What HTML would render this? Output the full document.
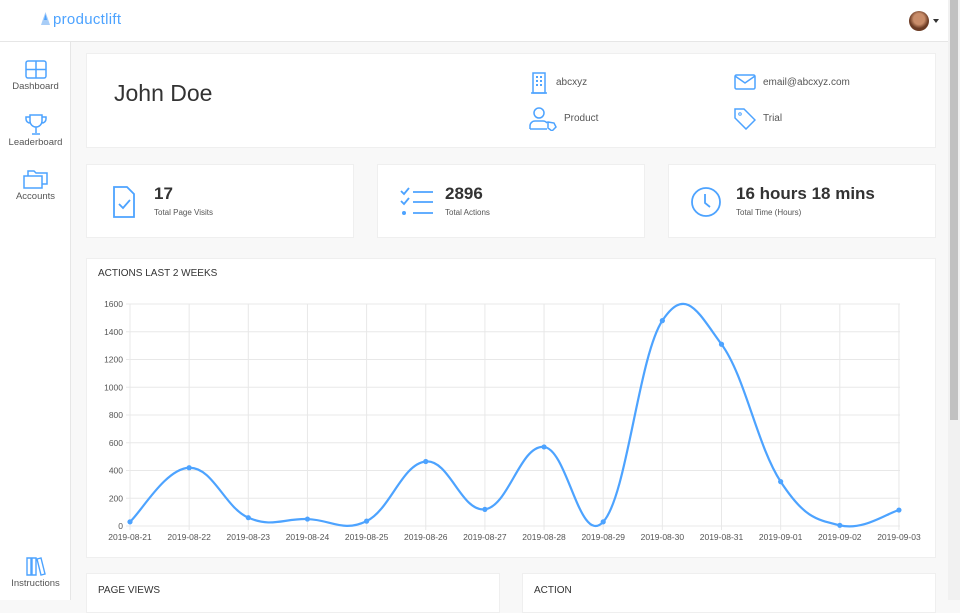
<!DOCTYPE html>
<html><head><meta charset="utf-8"><style>
*{box-sizing:border-box;margin:0;padding:0}
body{width:960px;height:600px;overflow:hidden;background:#f8f8f8;font-family:"Liberation Sans",sans-serif;color:#333;position:relative}
.top{position:absolute;left:0;top:0;width:948px;height:42px;background:#fff;border-bottom:1px solid #e6e6e6}
.logo{position:absolute;left:53px;top:11px;font-size:15px;color:#4da3ff;letter-spacing:.3px}
.side{position:absolute;left:0;top:42px;width:71px;height:558px;background:#fff;border-right:1px solid #e6e6e6}
.nav{position:absolute;left:0;width:71px;text-align:center;font-size:9.5px;color:#555}
.nav svg{display:block;margin:0 auto 2px}
.card{position:absolute;background:#fff;border:1px solid #efefef}
.scroll{position:absolute;right:0;top:0;width:12px;height:600px;background:#f1f1f1}
.scroll div{position:absolute;left:2px;top:0;width:8px;height:420px;background:#c1c1c1}
.lbl{font-size:10px;color:#555}
.big{font-size:17px;font-weight:bold;color:#333}
.sm{font-size:8px;color:#555;margin-top:4px}
</style></head><body>
<div class="top">
<svg style="position:absolute;left:40px;top:12px" width="11" height="14" viewBox="0 0 11 14"><path d="M5.5 0L8 7 10 13H1L3 7z" fill="#a8cdf7"/><path d="M5.5 2L7 8H4z" fill="#4da3ff"/></svg>
<div class="logo">productlift</div>
<div style="position:absolute;left:909px;top:11px;width:20px;height:20px;border-radius:50%;background:radial-gradient(circle at 50% 40%,#c98d6a 0 35%,#6b3b24 60%)"></div>
<div style="position:absolute;left:933px;top:19px;border:3px solid transparent;border-top:4px solid #333"></div>
</div>
<div class="side">
<div class="nav" style="top:18px"><svg width="22" height="19" viewBox="0 0 22 19"><rect x="1" y="1" width="20" height="17" rx="2" fill="none" stroke="#4da3ff" stroke-width="1.5"/><path d="M11 1v17M1 9.5h20" stroke="#4da3ff" stroke-width="1.5"/></svg>Dashboard</div>
<div class="nav" style="top:72px"><svg width="22" height="21" viewBox="0 0 22 21"><path d="M5 1h12v6a6 6 0 0 1-12 0zM5 3H1v2a4 4 0 0 0 4 4M17 3h4v2a4 4 0 0 1-4 4M11 13v6M7 20h8" fill="none" stroke="#4da3ff" stroke-width="1.5"/></svg>Leaderboard</div>
<div class="nav" style="top:127px"><svg width="25" height="20" viewBox="0 0 25 20"><path d="M1 7h18v12H1zM5 7V2h6l2 2h11v11h-5" fill="none" stroke="#4da3ff" stroke-width="1.5"/></svg>Accounts</div>
<div class="nav" style="top:514px"><svg width="22" height="20" viewBox="0 0 22 20"><path d="M2 2h4v17H2zM7 2h4v17H7zM12 3l4-1 4 16-4 1z" fill="none" stroke="#4da3ff" stroke-width="1.4"/></svg>Instructions</div>
</div>

<div class="card" style="left:86px;top:53px;width:850px;height:95px">
<div style="position:absolute;left:27px;top:26px;font-size:23px;color:#333">John Doe</div>
<svg style="position:absolute;left:443px;top:18px" width="18" height="22" viewBox="0 0 18 22"><rect x="3" y="1" width="12" height="20" fill="none" stroke="#4da3ff" stroke-width="1.5"/><path d="M1 21h16" stroke="#4da3ff" stroke-width="1.5"/><g fill="#4da3ff"><rect x="6" y="4" width="2" height="2"/><rect x="10" y="4" width="2" height="2"/><rect x="6" y="8" width="2" height="2"/><rect x="10" y="8" width="2" height="2"/><rect x="6" y="12" width="2" height="2"/><rect x="10" y="12" width="2" height="2"/></g></svg>
<div class="lbl" style="position:absolute;left:469px;top:23px">abcxyz</div>
<svg style="position:absolute;left:442px;top:53px" width="28" height="24" viewBox="0 0 28 24"><circle cx="10" cy="6" r="5" fill="none" stroke="#4da3ff" stroke-width="1.5"/><path d="M1 22v-3a5 5 0 0 1 5-5h8a5 5 0 0 1 4 2M1 22h17M19 15l6 1 2 4-4 4-4-3z" fill="none" stroke="#4da3ff" stroke-width="1.5"/></svg>
<div class="lbl" style="position:absolute;left:477px;top:59px">Product</div>
<svg style="position:absolute;left:647px;top:20px" width="22" height="16" viewBox="0 0 22 16"><rect x="1" y="1" width="20" height="14" rx="1.5" fill="none" stroke="#4da3ff" stroke-width="1.5"/><path d="M1 2l10 7 10-7" fill="none" stroke="#4da3ff" stroke-width="1.5"/></svg>
<div class="lbl" style="position:absolute;left:676px;top:23px">email@abcxyz.com</div>
<svg style="position:absolute;left:647px;top:54px" width="22" height="22" viewBox="0 0 22 22"><path d="M1 1h9l11 11-9 9L1 10z" fill="none" stroke="#4da3ff" stroke-width="1.5"/><circle cx="6" cy="6" r="1.3" fill="none" stroke="#4da3ff"/></svg>
<div class="lbl" style="position:absolute;left:676px;top:59px">Trial</div>
</div>

<div class="card" style="left:86px;top:164px;width:268px;height:74px">
<svg style="position:absolute;left:25px;top:20px" width="24" height="34" viewBox="0 0 24 34"><path d="M2 2h13l7 7v23H2z" fill="none" stroke="#4da3ff" stroke-width="1.8"/><path d="M7 19l4 4 7-8" fill="none" stroke="#4da3ff" stroke-width="1.8"/></svg>
<div style="position:absolute;left:67px;top:19px"><div class="big">17</div><div class="sm">Total Page Visits</div></div>
</div>
<div class="card" style="left:377px;top:164px;width:268px;height:74px">
<svg style="position:absolute;left:22px;top:22px" width="34" height="28" viewBox="0 0 34 28"><path d="M1 4l3 3 5-6M1 14l3 3 5-6M13 5h20M13 15h20M13 26h20" fill="none" stroke="#4da3ff" stroke-width="1.8"/><circle cx="4" cy="26" r="2" fill="#4da3ff"/></svg>
<div style="position:absolute;left:67px;top:19px"><div class="big">2896</div><div class="sm">Total Actions</div></div>
</div>
<div class="card" style="left:668px;top:164px;width:268px;height:74px">
<svg style="position:absolute;left:21px;top:21px" width="32" height="32" viewBox="0 0 32 32"><circle cx="16" cy="16" r="14" fill="none" stroke="#4da3ff" stroke-width="1.8"/><path d="M15 8v9l5 4" fill="none" stroke="#4da3ff" stroke-width="1.8"/></svg>
<div style="position:absolute;left:67px;top:19px"><div class="big">16 hours 18 mins</div><div class="sm">Total Time (Hours)</div></div>
</div>

<div class="card" style="left:86px;top:258px;width:850px;height:300px">
<div style="position:absolute;left:11px;top:9px;font-size:10px;color:#333">ACTIONS LAST 2 WEEKS</div>
</div>
<svg id="ch" style="position:absolute;left:0;top:0" width="960" height="600"></svg>

<div class="card" style="left:86px;top:573px;width:414px;height:40px"><div style="position:absolute;left:11px;top:11px;font-size:10px">PAGE VIEWS</div></div>
<div class="card" style="left:522px;top:573px;width:414px;height:40px"><div style="position:absolute;left:11px;top:11px;font-size:10px">ACTION</div></div>
<div class="scroll"><div></div></div>
<script>
var s='',xs=[],ys=[],v=[30,420,60,50,35,465,120,570,30,1480,1310,320,5,115];
var d=['21','22','23','24','25','26','27','28','29','30','31','09-01','09-02','09-03'];
for(var i=0;i<14;i++){xs.push(130+i*59.15);ys.push(526-v[i]*0.13875);}
for(var k=0;k<=8;k++){var y=526-k*27.75;s+='<line x1="126" x2="900" y1="'+y+'" y2="'+y+'" stroke="#e8e8e8"/><text x="123" y="'+(y+3)+'" font-size="8.5" fill="#555" text-anchor="end" font-family="Liberation Sans">'+(k*200)+'</text>';}
for(i=0;i<14;i++){s+='<line x1="'+xs[i]+'" x2="'+xs[i]+'" y1="304" y2="530" stroke="#e8e8e8"/><text x="'+xs[i]+'" y="540" font-size="8.5" fill="#555" text-anchor="middle" font-family="Liberation Sans">'+(d[i].length>2?'2019-'+d[i]:'2019-08-'+d[i])+'</text>';}
var p='M'+xs[0]+' '+ys[0],t=0.4;
for(i=0;i<13;i++){var x0=xs[Math.max(i-1,0)],y0=ys[Math.max(i-1,0)],x3=xs[Math.min(i+2,13)],y3=ys[Math.min(i+2,13)];
var c1x=xs[i]+(xs[i+1]-x0)*t/2,c1y=ys[i]+(ys[i+1]-y0)*t/2,c2x=xs[i+1]-(x3-xs[i])*t/2,c2y=ys[i+1]-(y3-ys[i])*t/2;
p+=' C'+c1x+' '+c1y+' '+c2x+' '+c2y+' '+xs[i+1]+' '+ys[i+1];}
s+='<path d="'+p+'" fill="none" stroke="#4da3ff" stroke-width="2.2"/>';
for(i=0;i<14;i++)s+='<circle cx="'+xs[i]+'" cy="'+ys[i]+'" r="2.6" fill="#4da3ff"/>';
document.getElementById('ch').innerHTML=s;
</script>
</body></html>
